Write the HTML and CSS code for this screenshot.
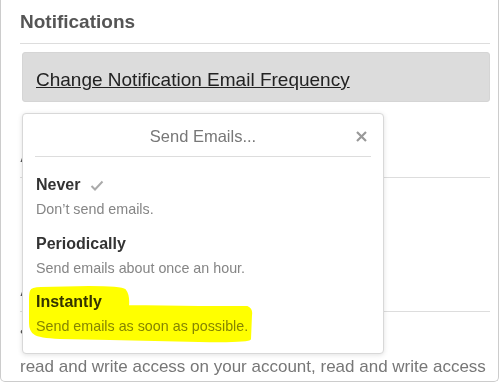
FILE: index.html
```html
<!DOCTYPE html>
<html lang="en">
<head>
    <meta charset="UTF-8">
    <meta name="viewport" content="width=device-width, initial-scale=1.0">
    <title>Settings</title>
    <link rel="stylesheet" href="styles.css">
</head>
<body>
    <div class="card">
        <section class="section">
            <h2 class="section-title">Notifications</h2>
            <div class="action-box">
                <a href="#" class="action-link">Change Notification Email Frequency</a>
            </div>
        </section>

        <section class="section section-empty">
            <h2 class="section-title">Account Email</h2>
        </section>

        <section class="section">
            <h2 class="section-title">Authorized Applications</h2>
            <p class="app-line">&bull;</p>
            <p class="app-text">read and write access on your account, read and write access</p>
        </section>

        <div class="popup">
            <div class="popup-head">
                <span></span>
                <span class="popup-title">Send Emails...</span>
                <button class="popup-close" type="button">
                    <svg width="11" height="11" viewBox="0 0 11 11">
                        <path d="M1 1 L10 10 M10 1 L1 10" stroke="#999" stroke-width="2.2" fill="none"/>
                    </svg>
                </button>
            </div>
            <ul class="options">
                <li class="option">
                    <div class="option-name">Never
                        <svg class="check" width="14" height="11" viewBox="0 0 14 11">
                            <path d="M1.5 6 L5 9.5 L12.5 1.5" stroke="#aaa" stroke-width="2" fill="none"/>
                        </svg>
                    </div>
                    <div class="option-desc">Don&rsquo;t send emails.</div>
                </li>
                <li class="option">
                    <div class="option-name">Periodically</div>
                    <div class="option-desc">Send emails about once an hour.</div>
                </li>
                <li class="option">
                    <div class="option-name">Instantly</div>
                    <div class="option-desc">Send emails as soon as possible.</div>
                    <!-- highlighter mark -->
                    <svg class="marker" width="226" height="60" viewBox="0 0 226 60">
                        <path d="M2 6 Q3 3 12 3 L60 2 Q92 2 96 5 Q100 10 99 21 L170 22 L218 22 Q223 24 222 30 L221 54 Q219 57 170 56 L81 54 L31 53 Q10 52 6 49 Q1 46 1 38 L1 15 Q1 8 2 6 Z" fill="#ffff00" stroke="#ffff00" stroke-width="2" stroke-linejoin="round"/>
                    </svg>
                </li>
            </ul>
        </div>
    </div>
</body>
</html>
```

FILE: styles.css
```css
body {
    margin: 0;
    background: #fff;
    font-family: "Liberation Sans", Arial, sans-serif;
}

.card {
    position: relative;
    width: 499px;
    box-sizing: border-box;
    border: 1px solid #ccc;
    border-top: none;
    border-radius: 0 0 5px 5px;
    padding: 11px 8px 2px 19px;
}

.section + .section {
    margin-top: 43px;
}

.section-empty {
    padding-bottom: 58px;
}

.section-title {
    margin: 0;
    font-size: 19px;
    line-height: 22px;
    font-weight: bold;
    color: #555;
    padding-bottom: 10px;
    border-bottom: 1px solid #ddd;
}

.action-box {
    margin: 8px 0 0 2px;
    height: 50px;
    box-sizing: border-box;
    padding: 16px 13px 12px;
    background: #dcdcdc;
    border: 1px solid #d5d5d5;
    border-radius: 3px;
}

.action-link {
    font-size: 19px;
    line-height: 22px;
    color: #222;
    text-decoration: underline;
}

.app-line {
    margin: 8px 0 0;
    font-size: 17px;
    line-height: 24px;
    color: #555;
}

.app-text {
    margin: 11px 0 0;
    font-size: 17px;
    line-height: 24px;
    color: #777;
    white-space: nowrap;
}

.popup {
    position: absolute;
    top: 113px;
    left: 21px;
    width: 362px;
    box-sizing: border-box;
    background: #fff;
    border: 1px solid #d8d8d8;
    border-radius: 4px;
    box-shadow: 0 1px 5px rgba(0, 0, 0, 0.12);
    padding: 0 12px 18px;
}

.popup-head {
    display: grid;
    grid-template-columns: 1fr auto 1fr;
    align-items: center;
    padding: 12px 0 10px;
    border-bottom: 1px solid #ddd;
}

.popup-title {
    font-size: 16.5px;
    line-height: 20px;
    color: #777;
}

.popup-close {
    justify-self: end;
    margin-right: 4px;
    padding: 0;
    border: none;
    background: none;
    display: flex;
    cursor: pointer;
}

.options {
    list-style: none;
    margin: 0;
    padding: 18px 0 0 1px;
}

.option {
    position: relative;
}

.option + .option {
    margin-top: 15.5px;
}

.option-name {
    font-size: 16px;
    line-height: 20px;
    font-weight: bold;
    color: #333;
}

.check {
    margin-left: 5px;
    vertical-align: -1px;
}

.option-desc {
    margin-top: 5px;
    font-size: 14.3px;
    line-height: 18px;
    color: #858585;
}

.marker {
    position: absolute;
    left: -7px;
    top: -7px;
    mix-blend-mode: multiply;
    pointer-events: none;
}
```
